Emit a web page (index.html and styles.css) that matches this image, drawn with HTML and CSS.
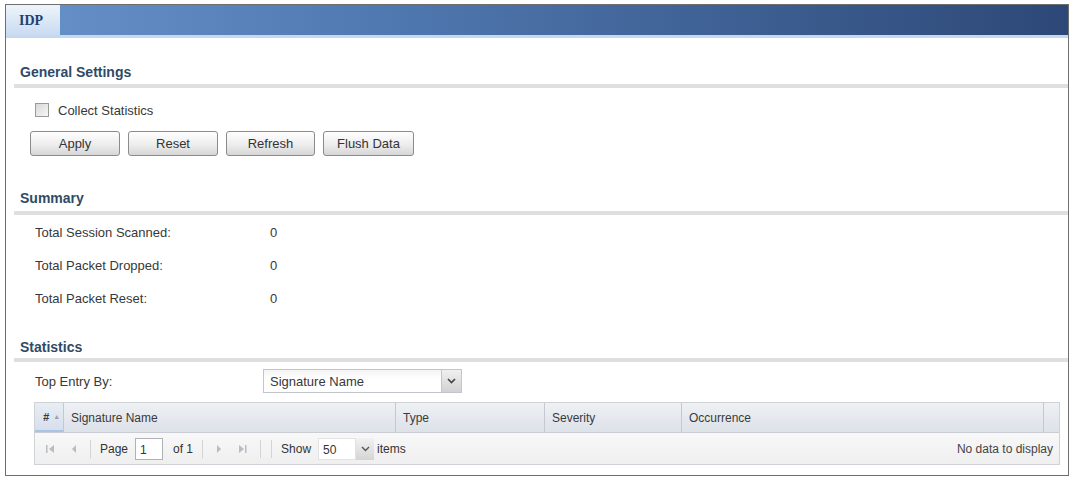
FILE: index.html
```html
<!DOCTYPE html>
<html lang="en">
<head>
    <meta charset="UTF-8">
    <title>IDP</title>
    <link rel="stylesheet" href="styles.css">
</head>
<body>
    <div class="frame">
        <div class="tabbar">
            <div class="tab">IDP</div>
        </div>

        <!-- General Settings -->
        <div class="section">
            <div class="heading">General Settings</div>
            <label class="check"><span class="box"></span>Collect Statistics</label>
            <div class="buttons">
                <button class="btn w90">Apply</button>
                <button class="btn w90">Reset</button>
                <button class="btn w89">Refresh</button>
                <button class="btn w91">Flush Data</button>
            </div>
        </div>

        <!-- Summary -->
        <div class="section summary">
            <div class="heading">Summary</div>
            <div class="row"><span class="label">Total Session Scanned:</span><span class="value">0</span></div>
            <div class="row"><span class="label">Total Packet Dropped:</span><span class="value">0</span></div>
            <div class="row"><span class="label">Total Packet Reset:</span><span class="value">0</span></div>
        </div>

        <!-- Statistics -->
        <div class="section stats">
            <div class="heading">Statistics</div>
            <div class="row entry">
                <span class="label">Top Entry By:</span>
                <div class="select">
                    <span class="select-text">Signature Name</span>
                    <span class="select-arrow"><svg width="9" height="6" viewBox="0 0 9 6"><path d="M1 1l3.5 3.5L8 1" fill="none" stroke="#444" stroke-width="1.6"/></svg></span>
                </div>
            </div>

            <div class="grid">
                <div class="grid-head">
                    <div class="col c-num"><b>#</b><span class="sort">&#9650;</span></div>
                    <div class="col c-name">Signature Name</div>
                    <div class="col c-type">Type</div>
                    <div class="col c-sev">Severity</div>
                    <div class="col c-occ">Occurrence</div>
                    <div class="col c-end"></div>
                </div>
                <div class="pager">
                    <span class="ico"><svg width="9" height="10" viewBox="0 0 9 10"><rect x="0" y="1" width="1.5" height="8" fill="#b8bcc4"/><path d="M8 1v8L3 5z" fill="#b8bcc4"/></svg></span>
                    <span class="ico"><svg width="6" height="10" viewBox="0 0 6 10"><path d="M5 1v8L1 5z" fill="#b8bcc4"/></svg></span>
                    <span class="sep"></span>
                    <span class="txt">Page</span>
                    <span class="input page-no">1</span>
                    <span class="txt">of 1</span>
                    <span class="sep"></span>
                    <span class="ico"><svg width="6" height="10" viewBox="0 0 6 10"><path d="M1 1v8L5 5z" fill="#b8bcc4"/></svg></span>
                    <span class="ico"><svg width="9" height="10" viewBox="0 0 9 10"><path d="M1 1v8L6 5z" fill="#b8bcc4"/><rect x="7" y="1" width="1.5" height="8" fill="#b8bcc4"/></svg></span>
                    <span class="sep"></span>
                    <span class="sep"></span>
                    <span class="txt">Show</span>
                    <span class="input show-no">50</span>
                    <span class="combo-arrow"><svg width="9" height="6" viewBox="0 0 9 6"><path d="M1 1l3.5 3.5L8 1" fill="none" stroke="#555" stroke-width="1.4"/></svg></span>
                    <span class="txt items">items</span>
                    <span class="empty">No data to display</span>
                </div>
            </div>
        </div>
    </div>
</body>
</html>
```

FILE: styles.css
```css
body {
    margin: 0;
    padding: 4px 2px 0 5px;
    background-color: #fff;
    font-family: "Liberation Sans", Arial, sans-serif;
    font-size: 13px;
    color: #383838;
}
.frame {
    border: 1px solid #6e6e6e;
    box-sizing: border-box;
    height: 472px;
}
.tabbar {
    height: 30px;
    background: linear-gradient(to right, #6792c9 0%, #5079b1 35%, #2d4877 100%);
    border-bottom: 3px solid #c6d8ef;
    display: flex;
}
.tab {
    width: 54px;
    background: linear-gradient(to bottom, #eef4fb, #c9dbf1);
    font-family: "Liberation Serif", "Times New Roman", serif;
    font-weight: bold;
    font-size: 14px;
    color: #21406f;
    padding: 8px 0 0 13px;
    box-sizing: border-box;
}
.section {
    padding: 0 0 0 8px;
}
.heading {
    margin-top: 26px;
    padding: 0 0 4px 6px;
    line-height: 16px;
    font-size: 14px;
    font-weight: bold;
    color: #304a66;
    border-bottom: 4px solid #dedfe1;
}
.check {
    display: flex;
    align-items: center;
    margin: 14px 0 0 21px;
    height: 16px;
}
.box {
    width: 12px;
    height: 12px;
    border: 1px solid #9a9a9a;
    background: linear-gradient(135deg, #d8d8d8, #f7f7f7);
    margin-right: 9px;
}
.buttons {
    display: flex;
    gap: 8px;
    margin: 13px 0 0 16px;
}
.btn {
    height: 25px;
    border: 1px solid #8c8c8c;
    border-radius: 3px;
    background: linear-gradient(to bottom, #fefefe 0%, #ededed 55%, #d6d6d6 100%);
    font-family: "Liberation Sans", Arial, sans-serif;
    font-size: 13px;
    color: #333;
    padding: 0;
}
.w90 { width: 90px; }
.w89 { width: 89px; }
.w91 { width: 91px; }
.summary .heading {
    margin-top: 34px;
    padding-bottom: 5px;
}
.row {
    display: flex;
    align-items: center;
    height: 33px;
    margin-left: 21px;
}
.summary .heading + .row {
    margin-top: 1px;
}
.label {
    width: 235px;
}
.stats .heading {
    margin-top: 24px;
    padding-bottom: 3px;
}
.entry {
    height: 24px;
    margin-top: 7px;
}
.entry .label {
    width: 228px;
}
.select {
    display: flex;
    width: 199px;
    height: 24px;
    border: 1px solid #c2c6cc;
    box-sizing: border-box;
    background: linear-gradient(to bottom, #f4f4f4, #fff 40%);
}
.select-text {
    flex: 1;
    padding: 4px 0 0 6px;
}
.select-arrow {
    width: 19px;
    border-left: 1px solid #c6c6c6;
    background: linear-gradient(to bottom, #f0f0f0, #d2d2d2);
    display: flex;
    align-items: center;
    justify-content: center;
}
.grid {
    margin: 9px 8px 0 20px;
    border: 1px solid #cfd3d8;
}
.grid-head {
    display: grid;
    grid-template-columns: 29px 332px 149px 137px 362px 1fr;
    height: 29px;
    background: linear-gradient(to bottom, #eef0f4, #dde2e9);
    border-bottom: 1px solid #c9cdd3;
    font-size: 12px;
    color: #3a3a3a;
}
.col {
    display: flex;
    align-items: center;
    padding-left: 7px;
    border-right: 1px solid #c4c8cf;
}
.col.c-end {
    border-right: none;
}
.c-num {
    padding-left: 8px;
    background: linear-gradient(to bottom, #e8edf4, #d6e0ec);
    border-bottom: 2px solid #a9c4e4;
}
.c-num b {
    font-style: italic;
    font-size: 11px;
}
.sort {
    font-size: 7px;
    color: #9aa3b0;
    margin-left: 4px;
}
.pager {
    display: flex;
    align-items: center;
    height: 31px;
    padding: 0 6px 0 3px;
    background: linear-gradient(to bottom, #f8f8f8, #efefef);
    font-size: 12px;
    color: #333;
}
.ico {
    display: flex;
    margin: 0 8px;
}
.sep {
    width: 1px;
    height: 18px;
    background: #d4d4d4;
    margin: 0 5px;
}
.txt {
    margin: 0 4px;
}
.input {
    height: 22px;
    box-sizing: border-box;
    border: 1px solid #aeb2b8;
    background: #fff;
    padding: 4px 0 0 4px;
    margin: 0 6px 0 3px;
}
.page-no {
    width: 28px;
}
.show-no {
    width: 38px;
    margin-right: 0;
    border-color: #e2e2e2;
}
.combo-arrow {
    width: 18px;
    height: 22px;
    background: linear-gradient(to bottom, #f2f2f2, #d4d4d4);
    display: flex;
    align-items: center;
    justify-content: center;
}
.items {
    margin-left: 3px;
}
.empty {
    margin-left: auto;
    color: #444;
}
```
